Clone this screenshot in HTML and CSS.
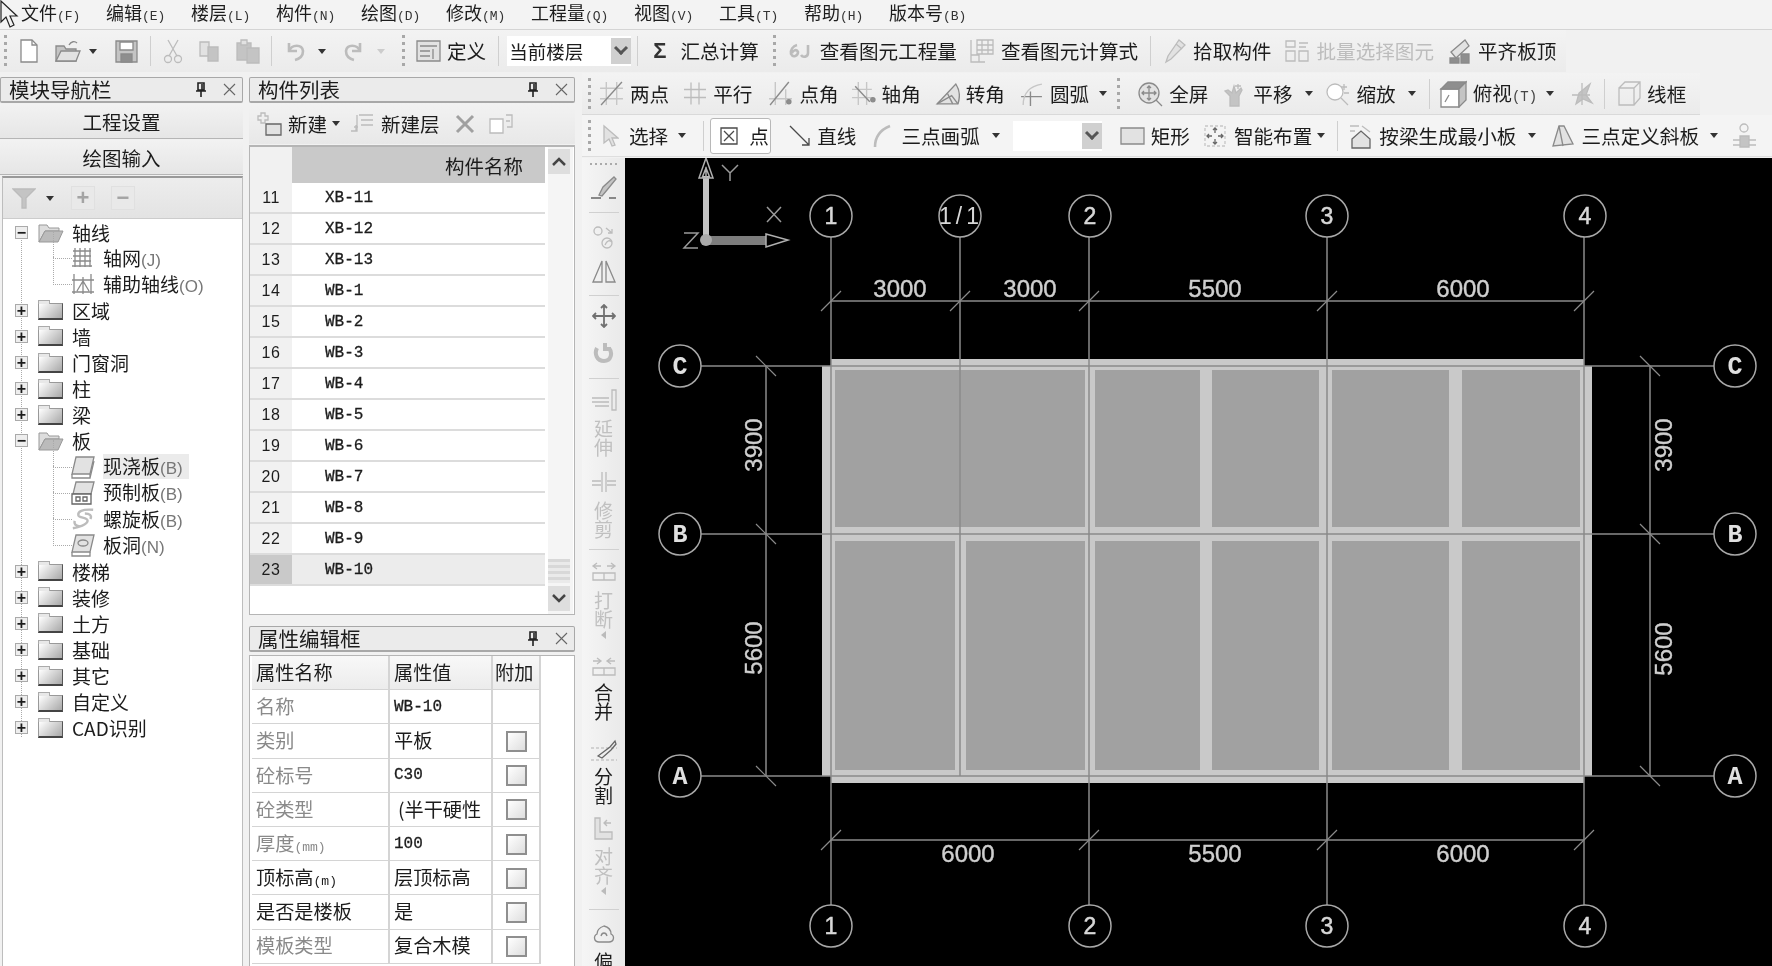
FILE: index.html
```html
<!DOCTYPE html>
<html lang="zh-CN">
<head>
    <meta charset="UTF-8">
    <title>构件绘图输入</title>
    <link rel="stylesheet" href="styles.css">
</head>
<body>
<div class="app">
    <svg class="cursor" width="20" height="30" viewBox="0 0 20 30"><path d="M1 1V22L6 17L10 27L14 25L10 16H17Z"/></svg>

    <!-- menu -->
    <div class="menubar">
        <span>文件<i>(F)</i></span><span>编辑<i>(E)</i></span><span>楼层<i>(L)</i></span><span>构件<i>(N)</i></span><span>绘图<i>(D)</i></span><span>修改<i>(M)</i></span><span>工程量<i>(Q)</i></span><span>视图<i>(V)</i></span><span>工具<i>(T)</i></span><span>帮助<i>(H)</i></span><span>版本号<i>(B)</i></span>
    </div>

    <!-- main toolbar -->
    <div class="toolbar top">
        <b class="grip ml4"></b>
        <svg class="ic ml12" width="20" height="24" viewBox="0 0 20 24"><path class="wh" d="M2 1H13L18 6V23H2Z"/><path d="M13 1V6H18"/></svg>
        <svg class="ic ml15" width="27" height="24" viewBox="0 0 27 24"><path class="gr" d="M2 7H10L12 10H22V22H2Z"/><path class="lt" d="M2 22L7 12H26L22 22Z"/><path d="M15 6C17 2 21 2 23 4"/></svg>
        <b class="arrow ml8"></b>
        <svg class="ic ml18" width="23" height="24" viewBox="0 0 23 24"><path class="gr" d="M1 2H22V23H1Z"/><path class="wh" d="M5 3H18V11H5Z"/><path class="dk" d="M6 15H17V23H6Z"/></svg>
        <b class="sep ml12"></b>
        <svg class="ic off ml12" width="20" height="26" viewBox="0 0 20 26"><circle cx="5" cy="21" r="3.5"/><circle cx="15" cy="21" r="3.5"/><path d="M6 18L15 2M14 18L5 2"/></svg>
        <svg class="ic off ml14" width="24" height="24" viewBox="0 0 24 24"><path class="lt" d="M3 3H12V17H3Z"/><path class="gr" d="M11 8H21V22H11Z"/></svg>
        <svg class="ic off ml14" width="26" height="26" viewBox="0 0 26 26"><path class="gr" d="M2 5H16V22H2Z"/><path class="lt" d="M6 2H12V7H6Z"/><path class="gr" d="M12 10H24V25H12Z"/></svg>
        <b class="sep ml10"></b>
        <svg class="ic off thick ml14" width="20" height="22" viewBox="0 0 20 22"><path d="M3 11C6 4 16 4 17 11C17 16 13 19 9 20M3 3V11H11"/></svg>
        <b class="arrow ml12"></b>
        <svg class="ic off thick ml17" width="20" height="22" viewBox="0 0 20 22"><path d="M17 11C14 4 4 4 3 11C3 16 7 19 11 20M17 3V11H9"/></svg>
        <b class="arrow light ml14"></b>
        <b class="grip ml17"></b>
        <span class="btn ml11"><svg class="ic" width="25" height="24" viewBox="0 0 25 24"><path class="lt" d="M1 2H24V22H1Z"/><path d="M4 7H21M4 12H14M4 17H14M17 10V20"/></svg>定义</span>
        <b class="sep ml12"></b>
        <span class="combo ml8 w124"><span class="combo-text">当前楼层</span><span class="combo-btn"></span></span>
        <b class="sep ml6"></b>
        <span class="btn sum ml15"><span class="sigma">Σ</span>汇总计算</span>
        <b class="grip ml14"></b>
        <span class="btn ml12 gap8"><svg class="ic off thick" width="24" height="18" viewBox="0 0 24 18"><path d="M9 3C5 4 2 8 3 12C5 16 10 14 10 10C9 7 5 8 4 11M20 3V11C20 15 15 16 13 13"/></svg>查看图元工程量</span>
        <span class="btn ml12"><svg class="ic off" width="26" height="26" viewBox="0 0 26 26"><path d="M8 2H24V16H8ZM8 7H24M8 12H24M13 2V16M19 2V16M2 2V24H16M2 17H10V24H2Z"/></svg>查看图元计算式</span>
        <b class="sep ml12"></b>
        <span class="btn ml12"><svg class="ic off" width="24" height="26" viewBox="0 0 24 26"><path class="lt" d="M16 2L22 7L8 21L3 24L5 18Z"/><path d="M13 6L19 11"/></svg>拾取构件</span>
        <span class="btn ml13 off"><svg class="ic off" width="26" height="24" viewBox="0 0 26 24"><path d="M2 2H11V8H2ZM2 12H11V22H2ZM15 12H24V22H15ZM15 4H24M15 8H22"/></svg>批量选择图元</span>
        <span class="btn ml13"><svg class="ic" width="25" height="26" viewBox="0 0 25 26"><path class="lt" d="M4 14L18 2L22 8L9 20Z"/><path class="dk" d="M3 20H12V25H3ZM14 16H22V25H14Z"/></svg>平齐板顶</span>
    </div>

    <div class="workspace">
        <!-- module navigator -->
        <div class="nav">
            <div class="dock-title">模块导航栏<span class="dock-ctl"><svg class="pin" width="12" height="15" viewBox="0 0 12 15"><path d="M3 1H9V8H3ZM1 9H11M6 9V15M7 2V8"/></svg><svg class="close" width="13" height="13" viewBox="0 0 13 13"><path d="M1 1L12 12M12 1L1 12"/></svg></span></div>
            <div class="nav-tab">工程设置</div>
            <div class="nav-tab">绘图输入</div>
            <div class="tree-box">
                <div class="tree-tools">
                    <svg class="ic off" width="24" height="21" viewBox="0 0 24 21"><path class="gr" d="M1 1H23L14 10V20H10V10Z"/></svg>
                    <b class="arrow ml10"></b>
                    <span class="tree-tool ml17">+</span>
                    <span class="tree-tool ml16">−</span>
                </div>
                <div class="tree">
                    <div class="node"><span class="exp">−</span><svg class="folder-open" width="26" height="21" viewBox="0 0 26 21"><path d="M1 20V3H9L11 6H21V9H7Z"/><path class="front" d="M1 20L7 9H25L20 20Z"/></svg>轴线</div>
                    <div class="kid"><svg class="ic" width="24" height="22" viewBox="0 0 24 22"><path d="M2 4H20M2 9H20M2 14H20M4 1V20M9 1V20M14 1V20M19 1V20M1 19H21"/></svg><span>轴网<i>(J)</i></span></div>
                    <div class="kid"><svg class="ic" width="24" height="22" viewBox="0 0 24 22"><path d="M3 1V21M20 1V21M1 7H23M1 19H23M6 18L12 8L18 18M12 4V21"/></svg><span>辅助轴线<i>(O)</i></span></div>
                    <div class="node"><span class="exp">+</span><b class="folder"></b>区域</div>
                    <div class="node"><span class="exp">+</span><b class="folder"></b>墙</div>
                    <div class="node"><span class="exp">+</span><b class="folder"></b>门窗洞</div>
                    <div class="node"><span class="exp">+</span><b class="folder"></b>柱</div>
                    <div class="node"><span class="exp">+</span><b class="folder"></b>梁</div>
                    <div class="node"><span class="exp">−</span><svg class="folder-open" width="26" height="21" viewBox="0 0 26 21"><path d="M1 20V3H9L11 6H21V9H7Z"/><path class="front" d="M1 20L7 9H25L20 20Z"/></svg>板</div>
                    <div class="kid"><svg class="ic" width="24" height="24" viewBox="0 0 24 24"><path class="lt" d="M5 2H23L19 19H1Z"/><path d="M1 19V23H19L19 19M19 23L23 6"/></svg><span class="sel">现浇板<i>(B)</i></span></div>
                    <div class="kid"><svg class="ic" width="24" height="24" viewBox="0 0 24 24"><path class="lt" d="M5 1H23L20 13H2Z"/><path class="wh dark" d="M1 13H20V23H1Z"/><path class="dark" d="M5 16H9V20H5ZM12 16H16V20H12Z"/></svg><span>预制板<i>(B)</i></span></div>
                    <div class="kid"><svg class="ic off thick" width="24" height="24" viewBox="0 0 26 24"><path d="M24 2C12 1 7 4 8 8C9 11 18 10 18 14C18 18 8 21 2 22M15 6C20 6 23 8 21 12M4 14C3 18 6 20 10 20"/></svg><span>螺旋板<i>(B)</i></span></div>
                    <div class="kid"><svg class="ic" width="24" height="24" viewBox="0 0 24 24"><path class="lt" d="M5 2H23L19 19H1Z"/><ellipse cx="12" cy="10" rx="5" ry="3"/><path d="M1 19V23H19L19 19"/></svg><span>板洞<i>(N)</i></span></div>
                    <div class="node"><span class="exp">+</span><b class="folder"></b>楼梯</div>
                    <div class="node"><span class="exp">+</span><b class="folder"></b>装修</div>
                    <div class="node"><span class="exp">+</span><b class="folder"></b>土方</div>
                    <div class="node"><span class="exp">+</span><b class="folder"></b>基础</div>
                    <div class="node"><span class="exp">+</span><b class="folder"></b>其它</div>
                    <div class="node"><span class="exp">+</span><b class="folder"></b>自定义</div>
                    <div class="node"><span class="exp">+</span><b class="folder"></b>CAD识别</div>
                </div>
            </div>
        </div>

        <!-- component list and properties -->
        <div class="mid">
            <div class="dock-title">构件列表<span class="dock-ctl"><svg class="pin" width="12" height="15" viewBox="0 0 12 15"><path d="M3 1H9V8H3ZM1 9H11M6 9V15M7 2V8"/></svg><svg class="close" width="13" height="13" viewBox="0 0 13 13"><path d="M1 1L12 12M12 1L1 12"/></svg></span></div>
            <div class="list-tools">
                <svg class="ic off" width="26" height="24" viewBox="0 0 26 24"><path d="M5 1H9V4H12V8H9V11H5V8H2V4H5Z"/><path class="lt dark" d="M10 12H25V23H10Z"/></svg>
                <span class="tool-text ml6">新建</span><b class="arrow ml5"></b>
                <svg class="ic off ml9" width="26" height="26" viewBox="0 0 26 26"><path d="M10 4H24M12 9H24M12 14H24M8 4V20H2M5 16H9M7 14V20"/></svg>
                <span class="tool-text ml6">新建层</span>
                <svg class="ic del ml15" width="20" height="20" viewBox="0 0 20 20"><path d="M2 2L18 18M18 2L2 18"/></svg>
                <svg class="ic off ml13" width="26" height="22" viewBox="0 0 26 22"><path class="wh" d="M2 6H15V20H2Z"/><path d="M18 2H24V14H19M18 8H22"/></svg>
            </div>
            <div class="grid-box">
                <table class="list-table">
                    <tr><th class="num"></th><th class="name">构件名称</th></tr>
                    <tr><td class="num">11</td><td class="code">XB-11</td></tr>
                    <tr><td class="num">12</td><td class="code">XB-12</td></tr>
                    <tr><td class="num">13</td><td class="code">XB-13</td></tr>
                    <tr><td class="num">14</td><td class="code">WB-1</td></tr>
                    <tr><td class="num">15</td><td class="code">WB-2</td></tr>
                    <tr><td class="num">16</td><td class="code">WB-3</td></tr>
                    <tr><td class="num">17</td><td class="code">WB-4</td></tr>
                    <tr><td class="num">18</td><td class="code">WB-5</td></tr>
                    <tr><td class="num">19</td><td class="code">WB-6</td></tr>
                    <tr><td class="num">20</td><td class="code">WB-7</td></tr>
                    <tr><td class="num">21</td><td class="code">WB-8</td></tr>
                    <tr><td class="num">22</td><td class="code">WB-9</td></tr>
                    <tr class="current"><td class="num">23</td><td class="code">WB-10</td></tr>
                </table>
                <div class="scroll">
                    <span class="scroll-btn"><svg width="14" height="9" viewBox="0 0 14 9"><path d="M1 8L7 2L13 8"/></svg></span>
                    <span class="scroll-thumb"></span>
                    <span class="scroll-btn"><svg width="14" height="9" viewBox="0 0 14 9"><path d="M1 1L7 7L13 1"/></svg></span>
                </div>
            </div>
            <div class="dock-title prop-title">属性编辑框<span class="dock-ctl"><svg class="pin" width="12" height="15" viewBox="0 0 12 15"><path d="M3 1H9V8H3ZM1 9H11M6 9V15M7 2V8"/></svg><svg class="close" width="13" height="13" viewBox="0 0 13 13"><path d="M1 1L12 12M12 1L1 12"/></svg></span></div>
            <div class="prop-box">
                <table class="prop-table">
                    <tr><th>属性名称</th><th>属性值</th><th class="extra">附加</th></tr>
                    <tr><td class="dim-label">名称</td><td class="code">WB-10</td><td></td></tr>
                    <tr><td class="dim-label">类别</td><td>平板</td><td><b class="check"></b></td></tr>
                    <tr><td class="dim-label">砼标号</td><td class="code">C30</td><td><b class="check"></b></td></tr>
                    <tr><td class="dim-label">砼类型</td><td class="clip">(半干硬性</td><td><b class="check"></b></td></tr>
                    <tr><td class="dim-label">厚度<i>(mm)</i></td><td class="code">100</td><td><b class="check"></b></td></tr>
                    <tr><td>顶标高<i>(m)</i></td><td>层顶标高</td><td><b class="check"></b></td></tr>
                    <tr><td>是否是楼板</td><td>是</td><td><b class="check"></b></td></tr>
                    <tr><td class="dim-label">模板类型</td><td>复合木模</td><td><b class="check"></b></td></tr>
                </table>
            </div>
        </div>

        <div class="right">
            <div class="toolbar row2">
                <b class="grip ml6"></b>
                <span class="btn ml8"><svg class="ic" width="25" height="25" viewBox="0 0 24 24"><path class="soft" d="M7 1V23M17 1V23M1 7H23M1 17H23"/><path d="M2 23L22 1"/></svg>两点</span>
                <span class="btn ml14"><svg class="ic off" width="24" height="25" viewBox="0 0 24 24"><path d="M8 1V23M16 1V23M1 8H23M1 16H23"/></svg>平行</span>
                <span class="btn ml16"><svg class="ic" width="25" height="25" viewBox="0 0 24 24"><path class="soft" d="M7 1V23M1 17H23M17 8V23"/><path d="M2 23L20 1"/><circle class="dk" cx="20" cy="20" r="2"/></svg>点角</span>
                <span class="btn ml12"><svg class="ic" width="25" height="25" viewBox="0 0 24 24"><path class="soft" d="M7 1V23M15 1V23M1 8H20M1 16H20"/><path d="M4 5L18 20"/><circle class="dk" cx="21" cy="18" r="2"/></svg>轴角</span>
                <span class="btn ml14"><svg class="ic" width="25" height="25" viewBox="0 0 24 24"><path class="lt" d="M2 22L20 3C24 9 24 16 22 22Z"/><path d="M2 22L16 14L22 22M12 12L17 22"/></svg>转角</span>
                <span class="btn ml14"><svg class="ic" width="25" height="25" viewBox="0 0 24 24"><path d="M11 24V10M2 15H22"/><path class="soft" d="M4 23C4 12 10 5 22 3"/></svg>圆弧</span>
                <b class="arrow ml10"></b>
                <b class="grip ml10"></b>
                <span class="btn ml17"><svg class="ic" width="26" height="26" viewBox="0 0 26 26"><circle class="lt" cx="12" cy="12" r="10"/><path d="M12 5V19M5 12H19M19 19L25 25M10 7L12 5L14 7M10 17L12 19L14 17M7 10L5 12L7 14M17 10L19 12L17 14"/></svg>全屏</span>
                <span class="btn ml15"><svg class="ic off" width="24" height="26" viewBox="0 0 24 26"><path class="gr" d="M7 25V15L2 10L5 9L9 12L11 5L13 12L18 7L19 9L16 15V25Z"/><path d="M15 3V8M12 5H18"/></svg>平移</span>
                <b class="arrow ml12"></b>
                <span class="btn ml12"><svg class="ic off" width="26" height="26" viewBox="0 0 26 26"><circle class="wh" cx="10" cy="11" r="8"/><path d="M16 17L23 24M19 3V9M16 6H22M19 12H24"/></svg>缩放</span>
                <b class="arrow ml12"></b>
                <b class="sep ml13"></b>
                <span class="btn ml9"><svg class="ic" width="28" height="28" viewBox="0 0 28 28"><path class="wh" d="M2 9H20V27H2Z"/><path class="dk" d="M2 9L9 2H27L20 9Z"/><path class="gr" d="M20 9L27 2V20L20 27Z"/><path d="M6 22L10 15"/></svg><span>俯视<i>(T)</i></span></span>
                <b class="arrow ml9"></b>
                <svg class="ic off ml16" width="24" height="26" viewBox="0 0 24 26"><path class="gr" d="M6 23L9 12L20 3L16 14L22 22L13 18Z"/><path d="M2 14H20M12 2V24"/></svg>
                <b class="sep ml10"></b>
                <span class="btn ml12"><svg class="ic off" width="24" height="25" viewBox="0 0 24 25"><path d="M2 7H17V24H2ZM2 7L8 1H23V17L17 24M17 7L23 1"/></svg>线框</span>
            </div>
            <div class="toolbar row3">
                <b class="grip ml6"></b>
                <span class="btn ml10 gap10"><svg class="ic off" width="18" height="24" viewBox="0 0 18 24"><path class="lt" d="M3 2V19L8 15L11 22L14 21L11 14H17Z"/></svg>选择</span>
                <b class="arrow ml10"></b>
                <b class="sep ml17"></b>
                <span class="pt-btn"><svg class="ic dark-ic" width="18" height="18" viewBox="0 0 18 18"><path d="M1 1H17V17H1ZM4 4L14 14M14 4L4 14"/></svg>点</span>
                <span class="btn ml18"><svg class="ic dark-ic" width="22" height="22" viewBox="0 0 22 22"><path d="M1 1L20 20M20 13V20H13"/></svg>直线</span>
                <span class="btn ml16 gap9"><svg class="ic off thick" width="20" height="24" viewBox="0 0 20 24"><path d="M3 23C3 13 8 6 18 2"/></svg>三点画弧</span>
                <b class="arrow ml12"></b>
                <span class="combo ml13 w89"><span class="combo-text"></span><span class="combo-btn"></span></span>
                <span class="btn ml18"><svg class="ic" width="25" height="18" viewBox="0 0 25 18"><path class="lt" d="M1 1H24V17H1Z"/></svg>矩形</span>
                <span class="btn ml14 gap8"><svg class="ic" width="22" height="24" viewBox="0 0 22 24"><path class="soft" d="M1 2H21V22H1Z" stroke-dasharray="3 2"/><path class="dark" d="M11 4V9M9 6L11 4L13 6M11 20V15M9 18L11 20L13 18M3 12H8M5 10L3 12L5 14M19 12H14M17 10L19 12L17 14"/></svg>智能布置</span>
                <b class="arrow ml5"></b>
                <b class="sep ml12"></b>
                <span class="btn ml10"><svg class="ic off" width="25" height="26" viewBox="0 0 25 26"><path d="M2 3H11M2 8H7M14 3L22 9"/><path class="lt dark" d="M4 16L13 8L22 16V25H4Z"/></svg>按梁生成最小板</span>
                <b class="arrow ml12"></b>
                <span class="btn ml14"><svg class="ic" width="25" height="26" viewBox="0 0 25 26"><path class="lt" d="M3 23L9 3H14L23 21Z"/><path d="M9 3L13 23"/></svg>三点定义斜板</span>
                <b class="arrow ml11"></b>
                <svg class="ic off ml14" width="25" height="26" viewBox="0 0 25 26"><circle cx="12" cy="5" r="4"/><path class="gr" d="M8 13H17V24H8Z"/><path d="M1 17H8M17 17H24M1 22H8M17 22H24"/></svg>
            </div>
            <div class="draw">
                <div class="vbar">
                    <b class="grip-h mt5"></b>
                    <svg class="ic mt10" width="30" height="25" viewBox="0 0 30 25"><path class="gr" d="M10 20L14 12L25 2L27 4L18 15L13 21Z"/><path class="dark" d="M2 23H12M20 23H27"/></svg>
                    <b class="sep-h mt12"></b>
                    <svg class="ic off mt12" width="24" height="24" viewBox="0 0 24 24"><circle cx="6" cy="6" r="4"/><circle cx="15" cy="18" r="5"/><path d="M14 3L20 8M20 4V8H16M13 20C15 15 18 15 20 17"/></svg>
                    <svg class="ic mt10" width="26" height="24" viewBox="0 0 26 24"><path d="M2 23L11 2V23ZM24 23L15 2V23Z"/></svg>
                    <b class="sep-h mt12"></b>
                    <svg class="ic mt8 dark-ish" width="24" height="24" viewBox="0 0 24 24"><path d="M12 1V23M1 12H23M9 4L12 1L15 4M9 20L12 23L15 20M4 9L1 12L4 15M20 9L23 12L20 15"/></svg>
                    <svg class="ic off heavy mt14" width="22" height="22" viewBox="0 0 22 22"><path d="M4 6C1 12 4 19 11 19C18 19 20 11 16 6M12 1V7H18"/></svg>
                    <b class="sep-h mt14"></b>
                    <svg class="ic off mt10" width="26" height="22" viewBox="0 0 26 22"><path d="M21 1H25V21H21ZM1 9H18M1 13H18M4 17H18"/></svg>
                    <span class="vtext off mt8">延伸</span>
                    <svg class="ic off mt14" width="26" height="22" viewBox="0 0 26 22"><path d="M11 1V21M15 1V21M1 10H10M16 10H25M1 14H10M16 14H25"/></svg>
                    <span class="vtext off mt8">修剪</span>
                    <b class="sep-h mt10"></b>
                    <svg class="ic off mt12" width="26" height="20" viewBox="0 0 26 20"><path d="M2 11H24V18H2ZM13 11V18M10 4H2M6 1L2 4L6 7M16 4H24M20 1L24 4L20 7"/></svg>
                    <span class="vtext off mt9">打断</span>
                    <b class="arrow-left off mt2"></b>
                    <svg class="ic off mt18" width="26" height="20" viewBox="0 0 26 20"><path d="M2 11H24V18H2ZM13 11V18M2 4H10M6 1L10 4L6 7M24 4H16M20 1L16 4L20 7"/></svg>
                    <span class="vtext mt6">合并</span>
                    <svg class="ic mt18" width="28" height="24" viewBox="0 0 28 24"><path class="soft" d="M1 9H27M1 21H27" stroke-dasharray="3 2"/><path class="dark" d="M8 17L20 8L25 2L26 5L21 11L12 19Z"/></svg>
                    <span class="vtext mt4">分割</span>
                    <svg class="ic off mt12" width="24" height="24" viewBox="0 0 24 24"><path class="lt" d="M3 1V22H20V15H8V1ZM19 6H12M15 3L12 6L15 9"/></svg>
                    <span class="vtext off mt6">对齐</span>
                    <b class="arrow-left off mt2"></b>
                    <b class="sep-h mt14"></b>
                    <svg class="ic mt12" width="24" height="22" viewBox="0 0 24 22"><path d="M7 20C2 20 1 14 5 12C5 7 9 5 12 4C16 5 19 7 19 12C23 14 22 20 17 20ZM9 14C10 10 14 10 15 14"/></svg>
                    <span class="vtext mt8">偏</span>
                </div>
                <div class="canvas">
                    <svg class="plan" width="1147" height="808" viewBox="625 158 1147 808">
                        <!-- slab -->
                        <path class="slab" d="M831 359H1584V366H1592V776H1584V783H831V776H822V366H831Z"/>
                        <rect class="panel" x="835" y="370" width="250" height="157"/>
                        <rect class="panel" x="1095" y="370" width="105" height="157"/>
                        <rect class="panel" x="1212" y="370" width="107" height="157"/>
                        <rect class="panel" x="1332" y="370" width="117" height="157"/>
                        <rect class="panel" x="1462" y="370" width="118" height="157"/>
                        <rect class="panel" x="835" y="541" width="120" height="229"/>
                        <rect class="panel" x="966" y="541" width="119" height="229"/>
                        <rect class="panel" x="1095" y="541" width="105" height="229"/>
                        <rect class="panel" x="1212" y="541" width="107" height="229"/>
                        <rect class="panel" x="1332" y="541" width="117" height="229"/>
                        <rect class="panel" x="1462" y="541" width="118" height="229"/>
                        <!-- axes -->
                        <path class="axis" d="M831 237V905M960 237V776M1089 237V905M1327 237V905M1584 237V905M701 366H1714M701 534H1714M701 776H1714"/>
                        <!-- dimension lines -->
                        <path class="axis" d="M831 301H1584M831 840H1584M766 366V776M1650 366V776"/>
                        <path class="tick" d="M821 311L841 291M950 311L970 291M1079 311L1099 291M1317 311L1337 291M1574 311L1594 291M821 850L841 830M1079 850L1099 830M1317 850L1337 830M1574 850L1594 830M756 356L776 376M756 524L776 544M756 766L776 786M1640 356L1660 376M1640 524L1660 544M1640 766L1660 786"/>
                        <text class="dim" x="900" y="297">3000</text>
                        <text class="dim" x="1030" y="297">3000</text>
                        <text class="dim" x="1215" y="297">5500</text>
                        <text class="dim" x="1463" y="297">6000</text>
                        <text class="dim" x="968" y="862">6000</text>
                        <text class="dim" x="1215" y="862">5500</text>
                        <text class="dim" x="1463" y="862">6000</text>
                        <text class="dim" transform="translate(762 445) rotate(-90)">3900</text>
                        <text class="dim" transform="translate(762 648) rotate(-90)">5600</text>
                        <text class="dim" transform="translate(1672 445) rotate(-90)">3900</text>
                        <text class="dim" transform="translate(1672 649) rotate(-90)">5600</text>
                        <!-- axis bubbles -->
                        <circle class="bubble" cx="831" cy="216" r="21"/><text class="mark" x="831" y="224">1</text>
                        <circle class="bubble" cx="960" cy="216" r="21"/><text class="mark wide-mark" x="961" y="224">1/1</text>
                        <circle class="bubble" cx="1090" cy="216" r="21"/><text class="mark" x="1090" y="224">2</text>
                        <circle class="bubble" cx="1327" cy="216" r="21"/><text class="mark" x="1327" y="224">3</text>
                        <circle class="bubble" cx="1585" cy="216" r="21"/><text class="mark" x="1585" y="224">4</text>
                        <circle class="bubble" cx="831" cy="926" r="21"/><text class="mark" x="831" y="934">1</text>
                        <circle class="bubble" cx="1090" cy="926" r="21"/><text class="mark" x="1090" y="934">2</text>
                        <circle class="bubble" cx="1327" cy="926" r="21"/><text class="mark" x="1327" y="934">3</text>
                        <circle class="bubble" cx="1585" cy="926" r="21"/><text class="mark" x="1585" y="934">4</text>
                        <circle class="bubble" cx="680" cy="366" r="21"/><text class="letter" x="680" y="374">C</text>
                        <circle class="bubble" cx="680" cy="534" r="21"/><text class="letter" x="680" y="542">B</text>
                        <circle class="bubble" cx="680" cy="776" r="21"/><text class="letter" x="680" y="784">A</text>
                        <circle class="bubble" cx="1735" cy="366" r="21"/><text class="letter" x="1735" y="374">C</text>
                        <circle class="bubble" cx="1735" cy="534" r="21"/><text class="letter" x="1735" y="542">B</text>
                        <circle class="bubble" cx="1735" cy="776" r="21"/><text class="letter" x="1735" y="784">A</text>
                        <!-- coordinate triad -->
                        <rect class="ax-y" x="703" y="176" width="6" height="62"/>
                        <path class="ax-head" d="M706 158L699 178H713Z M706 167V178M702 178L706 168L710 178"/>
                        <rect class="ax-x" x="706" y="236" width="60" height="9"/>
                        <path class="ax-head" d="M766 234L788 240L766 247Z"/>
                        <circle class="ax-o" cx="706" cy="240" r="6"/>
                        <path class="ax-label" d="M722 165L730 173L738 165M730 173V181M767 207L781 222M781 207L767 222M684 233H698L684 248H698"/>
                    </svg>
                </div>
            </div>
        </div>
    </div>
</div>
</body>
</html>
```

FILE: styles.css
```css
/* page */
body {
    margin: 0;
    background-color: #f1f1f1;
}

.app {
    position: relative;
    width: 1772px;
    height: 966px;
    overflow: hidden;
    font-family: "Noto Sans CJK SC", "Liberation Sans", sans-serif;
    font-size: 19.6px;
    color: #1c1c1c;
    filter: blur(0.4px);
}

.cursor {
    position: absolute;
    left: 0;
    top: 0;
}

.cursor path {
    fill: none;
    stroke: #222;
    stroke-width: 1.2;
}

i {
    font-style: normal;
}

/* menu */
.menubar {
    display: flex;
    gap: 25.6px;
    height: 25px;
    padding: 0 0 4px 21px;
    align-items: center;
    font-size: 18px;
    line-height: 1;
    background-color: #f3f3f3;
    border-bottom: 1px solid #d4d4d4;
}

.menubar i {
    font-family: "Liberation Mono", monospace;
    font-size: 13px;
    color: #333;
}

/* toolbars */
.toolbar {
    display: flex;
    align-items: center;
    height: 42px;
    line-height: 1;
    white-space: nowrap;
    overflow: hidden;
    background: linear-gradient(#f3f3f3, #ebebeb);
}

.toolbar.top {
    width: 1566px;
}

.row2 {
    width: 1118px;
    border-bottom: 1px solid #d9d9d9;
    box-sizing: border-box;
}

.row3 {
    background: #f4f4f4;
    border-bottom: 1px solid #dedede;
    box-sizing: border-box;
}

.btn {
    display: inline-flex;
    align-items: center;
    gap: 6px;
    flex: none;
}

.btn i {
    font-family: "Liberation Mono", monospace;
    font-size: 14px;
    color: #444;
}

.btn.off {
    color: #bdbdbd;
}

.btn.sum {
    gap: 14px;
}

.btn.gap8 {
    gap: 8px;
}

.btn.gap9 {
    gap: 9px;
}

.btn.gap10 {
    gap: 10px;
}

.sigma {
    font-family: "Liberation Sans", sans-serif;
    font-size: 22px;
    font-weight: bold;
    color: #333;
}

.ml4 { margin-left: 4px; }
.ml5 { margin-left: 5px; }
.ml6 { margin-left: 6px; }
.ml8 { margin-left: 8px; }
.ml9 { margin-left: 9px; }
.ml10 { margin-left: 10px; }
.ml11 { margin-left: 11px; }
.ml12 { margin-left: 12px; }
.ml13 { margin-left: 13px; }
.ml14 { margin-left: 14px; }
.ml15 { margin-left: 15px; }
.ml16 { margin-left: 16px; }
.ml17 { margin-left: 17px; }
.ml18 { margin-left: 18px; }

.mt2 { margin-top: 2px; }
.mt4 { margin-top: 4px; }
.mt5 { margin-top: 5px; }
.mt6 { margin-top: 6px; }
.mt8 { margin-top: 8px; }
.mt9 { margin-top: 9px; }
.mt10 { margin-top: 10px; }
.mt12 { margin-top: 12px; }
.mt14 { margin-top: 14px; }
.mt18 { margin-top: 18px; }

.grip {
    flex: none;
    width: 3px;
    height: 32px;
    background: repeating-linear-gradient(#a8a8a8 0 3px, transparent 3px 7px);
}

.sep {
    flex: none;
    width: 1px;
    height: 30px;
    background-color: #cfcfcf;
}

.arrow {
    flex: none;
    width: 0;
    height: 0;
    border-left: 4px solid transparent;
    border-right: 4px solid transparent;
    border-top: 5px solid #333;
}

.arrow.light {
    border-top-color: #ccc;
}

.combo {
    display: inline-flex;
    flex: none;
    height: 30px;
    background-color: #fff;
    font-size: 18.5px;
    align-items: center;
}

.combo.w124 {
    width: 124px;
}

.combo.w89 {
    width: 89px;
}

.combo-text {
    flex: 1;
    padding-left: 2px;
}

.combo-btn {
    position: relative;
    width: 20px;
    height: 26px;
    background-color: #d0d0d0;
}

.combo-btn::after {
    content: "";
    position: absolute;
    left: 5px;
    top: 5px;
    width: 7px;
    height: 7px;
    border-right: 3px solid #555;
    border-bottom: 3px solid #555;
    transform: rotate(45deg);
}

.pt-btn {
    display: inline-flex;
    flex: none;
    align-items: center;
    gap: 11px;
    width: 61px;
    height: 36px;
    margin-left: 6px;
    padding-left: 9px;
    box-sizing: border-box;
    background-color: #fff;
    border: 1px solid #b8b8b8;
    border-radius: 3px;
}

/* icons */
.ic {
    flex: none;
    fill: none;
    stroke: #8a8a8a;
    stroke-width: 1.3;
}

.ic.off {
    stroke: #bcbcbc;
}

.ic.thick {
    stroke-width: 2.6;
}

.ic.heavy {
    stroke-width: 4;
}

.ic.del {
    stroke: #a0a0a0;
    stroke-width: 3;
}

.ic.dark-ic {
    stroke: #4a4a4a;
}

.ic.dark-ish {
    stroke: #707070;
    stroke-width: 1.8;
}

.ic .wh { fill: #fff; }
.ic .lt { fill: #e2e2e2; }
.ic .gr { fill: #c4c4c4; }
.ic .dk { fill: #8e8e8e; }
.ic .soft { stroke: #c6c6c6; }
.ic .dark { stroke: #666; }

/* layout under the toolbars */
.workspace {
    display: flex;
    height: 894px;
}

.nav {
    width: 243px;
    margin-top: 5px;
    flex: none;
}

.mid {
    width: 326px;
    margin-top: 5px;
    margin-left: 6px;
    flex: none;
}

.right {
    flex: 1;
    min-width: 0;
    margin-left: 7px;
    margin-top: 1px;
}

/* dock panels */
.dock-title {
    display: flex;
    align-items: center;
    height: 23px;
    padding-left: 8px;
    font-size: 20.5px;
    line-height: 1;
    background-color: #ebebeb;
    border: 1px solid #a8a8a8;
    border-bottom-width: 2px;
    border-radius: 2px;
}

.dock-ctl {
    display: flex;
    align-items: center;
    gap: 16px;
    margin-left: auto;
    padding-right: 6px;
}

.pin {
    fill: none;
    stroke: #222;
    stroke-width: 1.6;
}

.close {
    fill: none;
    stroke: #666;
    stroke-width: 1.1;
}

.nav-tab {
    height: 33px;
    margin-top: 1px;
    padding-top: 1px;
    font-size: 19.5px;
    line-height: 34px;
    text-align: center;
    background: linear-gradient(#f2f2f2, #e6e6e6);
    border-bottom: 1px solid #b5b5b5;
}

.tree-box {
    height: 790px;
    margin: 1px 0 0 2px;
    background-color: #fff;
    border: 1px solid #bdbdbd;
    border-top: 2px solid #999;
}

.tree-tools {
    display: flex;
    align-items: center;
    height: 40px;
    padding-left: 9px;
    background: linear-gradient(#ededed, #e3e3e3);
    border-bottom: 1px solid #ccc;
}

.tree-tool {
    width: 24px;
    height: 24px;
    font: bold 22px/22px "Liberation Sans", sans-serif;
    text-align: center;
    color: #a4a4a4;
    background-color: #e9e9e9;
    border: 1px solid #e0e0e0;
    box-sizing: border-box;
}

/* tree */
.tree {
    position: relative;
}

.tree::before {
    content: "";
    position: absolute;
    left: 18px;
    top: 18px;
    height: 500px;
    border-left: 1px dotted #aaa;
}

.node, .kid {
    position: relative;
    display: flex;
    align-items: center;
    height: 26.1px;
    font-size: 19px;
    line-height: 1;
    white-space: nowrap;
}

.node {
    padding-left: 12px;
    gap: 9px;
}

.exp {
    position: relative;
    width: 13px;
    height: 13px;
    font: bold 16px/12px "Liberation Sans", sans-serif;
    text-align: center;
    background-color: #eee;
    border: 1px solid #aaa;
    box-sizing: border-box;
    margin-right: 1px;
}

.folder {
    position: relative;
    flex: none;
    width: 25px;
    height: 17px;
    margin-top: 3px;
    background: linear-gradient(135deg, #fff, #a8a8a8);
    border: 1px solid #999;
    border-bottom: 2px solid #444;
    border-right-color: #555;
    box-sizing: border-box;
}

.folder::before {
    content: "";
    position: absolute;
    left: -1px;
    top: -4px;
    width: 10px;
    height: 3px;
    background-color: #e8e8e8;
    border: 1px solid #aaa;
    border-bottom: none;
}

.folder-open {
    flex: none;
    fill: #ddd;
    stroke: #999;
    margin-right: -1px;
}

.folder-open .front {
    fill: #bbb;
}

.kid {
    padding-left: 68px;
    gap: 8px;
}

.kid::before {
    content: "";
    position: absolute;
    left: 50px;
    top: -14px;
    width: 18px;
    height: 27px;
    border-left: 1px dotted #aaa;
    border-bottom: 1px dotted #aaa;
}

.kid i {
    font-family: "Liberation Sans", sans-serif;
    font-size: 17px;
    color: #777;
}

.sel {
    background-color: #ebebeb;
    padding: 2px 6px 2px 0;
}

/* component list */
.list-tools {
    display: flex;
    align-items: center;
    height: 41px;
    padding-left: 7px;
    line-height: 1;
    background: linear-gradient(#f2f2f2, #e8e8e8);
}

.tool-text {
    flex: none;
    font-size: 19.5px;
}

.grid-box {
    display: flex;
    height: 470px;
    margin-top: 1px;
    background-color: #fff;
    border: 1px solid #b5b5b5;
    border-top-width: 2px;
    box-sizing: border-box;
}

.list-table {
    flex: none;
    width: 295px;
    height: 438px;
    border-collapse: collapse;
    table-layout: fixed;
}

.list-table th {
    height: 36px;
    padding: 0;
}

.list-table th.name {
    text-align: right;
    padding-right: 22px;
    font-size: 19.5px;
    font-weight: normal;
    background-color: #c9c9c9;
}

.list-table td {
    height: 29px;
    padding: 0;
    border-bottom: 2px solid #dcdcdc;
    line-height: 1;
}

.list-table .num {
    width: 42px;
    text-align: center;
    font: 16px "Liberation Sans", sans-serif;
    letter-spacing: 0.5px;
    background-color: #f1f1f1;
}

.list-table th.num {
    background-color: #f1f1f1;
}

.list-table .code {
    padding-left: 33px;
}

.code {
    font: 16px "Liberation Mono", monospace;
    -webkit-text-stroke: 0.3px #1c1c1c;
}

.current td {
    background-color: #ececec;
}

.current td.num {
    background-color: #c9c9c9;
}

.scroll {
    display: flex;
    flex-direction: column;
    width: 25px;
    margin-left: 3px;
    padding-top: 2px;
    background-color: #f5f5f5;
}

.scroll-btn {
    display: flex;
    align-items: center;
    justify-content: center;
    width: 22px;
    height: 25px;
    background-color: #dedede;
}

.scroll-btn svg {
    fill: none;
    stroke: #444;
    stroke-width: 2.5;
}

.scroll-thumb {
    width: 22px;
    height: 24px;
    margin-top: 385px;
    margin-bottom: 3px;
    background: repeating-linear-gradient(#d8d8d8 0 3px, #eaeaea 3px 6px);
}

/* properties */
.prop-title {
    margin-top: 11px;
}

.prop-box {
    height: 312px;
    margin-top: 3px;
    padding: 0 0 0 2px;
    background-color: #fff;
    border: 1px solid #b5b5b5;
    box-sizing: border-box;
}

.prop-table {
    width: 289px;
    border-collapse: collapse;
    table-layout: fixed;
    font-size: 19.2px;
    line-height: 1;
}

.prop-table th, .prop-table td {
    height: 33.2px;
    padding: 0 0 0 4px;
    text-align: left;
    font-weight: normal;
    white-space: nowrap;
    overflow: hidden;
    border-right: 2px solid #d4d4d4;
    border-bottom: 1px solid #d4d4d4;
}

.prop-table th {
    background: linear-gradient(#f8f8f8, #ececec);
}

.prop-table th:nth-child(1), .prop-table td:nth-child(1) {
    width: 132px;
}

.prop-table th:nth-child(2), .prop-table td:nth-child(2) {
    width: 97px;
}

.prop-table td:nth-child(3) {
    text-align: center;
    padding: 0;
}

.prop-table i {
    font-family: "Liberation Mono", monospace;
    font-size: 13px;
}

.prop-table .extra {
    padding-left: 2px;
}

.prop-table .code {
    font-size: 16px;
}

.prop-table .clip {
    padding-left: 8px;
}

.dim-label {
    color: #8a8a8a;
}

.check {
    display: inline-block;
    width: 21px;
    height: 21px;
    vertical-align: middle;
    background: linear-gradient(135deg, #fff, #dedede);
    border: 2px solid #8f8f8f;
    box-sizing: border-box;
}

/* drawing area */
.draw {
    display: flex;
    height: 808px;
    margin-top: 1px;
}

.vbar {
    display: flex;
    flex-direction: column;
    align-items: center;
    flex: none;
    width: 43px;
    overflow: hidden;
    background: linear-gradient(90deg, #f5f5f5, #e9e9e9);
}

.grip-h {
    flex: none;
    width: 28px;
    height: 2px;
    background: repeating-linear-gradient(90deg, #aaa 0 2px, transparent 2px 5px);
}

.sep-h {
    flex: none;
    width: 30px;
    height: 1px;
    background-color: #d0d0d0;
}

.vtext {
    flex: none;
    writing-mode: vertical-rl;
    font-size: 19px;
    line-height: 1;
}

.vtext.off {
    color: #c0c0c0;
}

.arrow-left {
    flex: none;
    width: 0;
    height: 0;
    border-top: 4px solid transparent;
    border-bottom: 4px solid transparent;
    border-right: 5px solid #bbb;
}

.canvas {
    flex: 1;
    min-width: 0;
    background-color: #000;
}

.plan {
    display: block;
}

.slab {
    fill: #c9c9c9;
}

.panel {
    fill: #a1a1a1;
}

.axis {
    fill: none;
    stroke: #8a8a8a;
    stroke-width: 1.5;
}

.tick {
    fill: none;
    stroke: #8a8a8a;
    stroke-width: 1.2;
}

.dim {
    font: 24px "Liberation Sans", sans-serif;
    fill: #cfcfcf;
    stroke: #cfcfcf;
    stroke-width: 0.4;
    text-anchor: middle;
}

.bubble {
    fill: #000;
    stroke: #a8a8a8;
    stroke-width: 1.5;
}

.mark {
    font: 23px "Liberation Sans", sans-serif;
    fill: #d8d8d8;
    stroke: #d8d8d8;
    stroke-width: 0.5;
    text-anchor: middle;
}

.mark.wide-mark {
    letter-spacing: 4px;
    stroke-width: 0;
}

.letter {
    font: bold 25px "Liberation Mono", monospace;
    fill: #e0e0e0;
    text-anchor: middle;
}

.ax-y {
    fill: #c4c4c4;
}

.ax-x {
    fill: #7d7d7d;
}

.ax-head {
    fill: #000;
    stroke: #b0b0b0;
    stroke-width: 1.5;
}

.ax-o {
    fill: #aaa;
}

.ax-label {
    fill: none;
    stroke: #9a9a9a;
    stroke-width: 1.5;
}
```
